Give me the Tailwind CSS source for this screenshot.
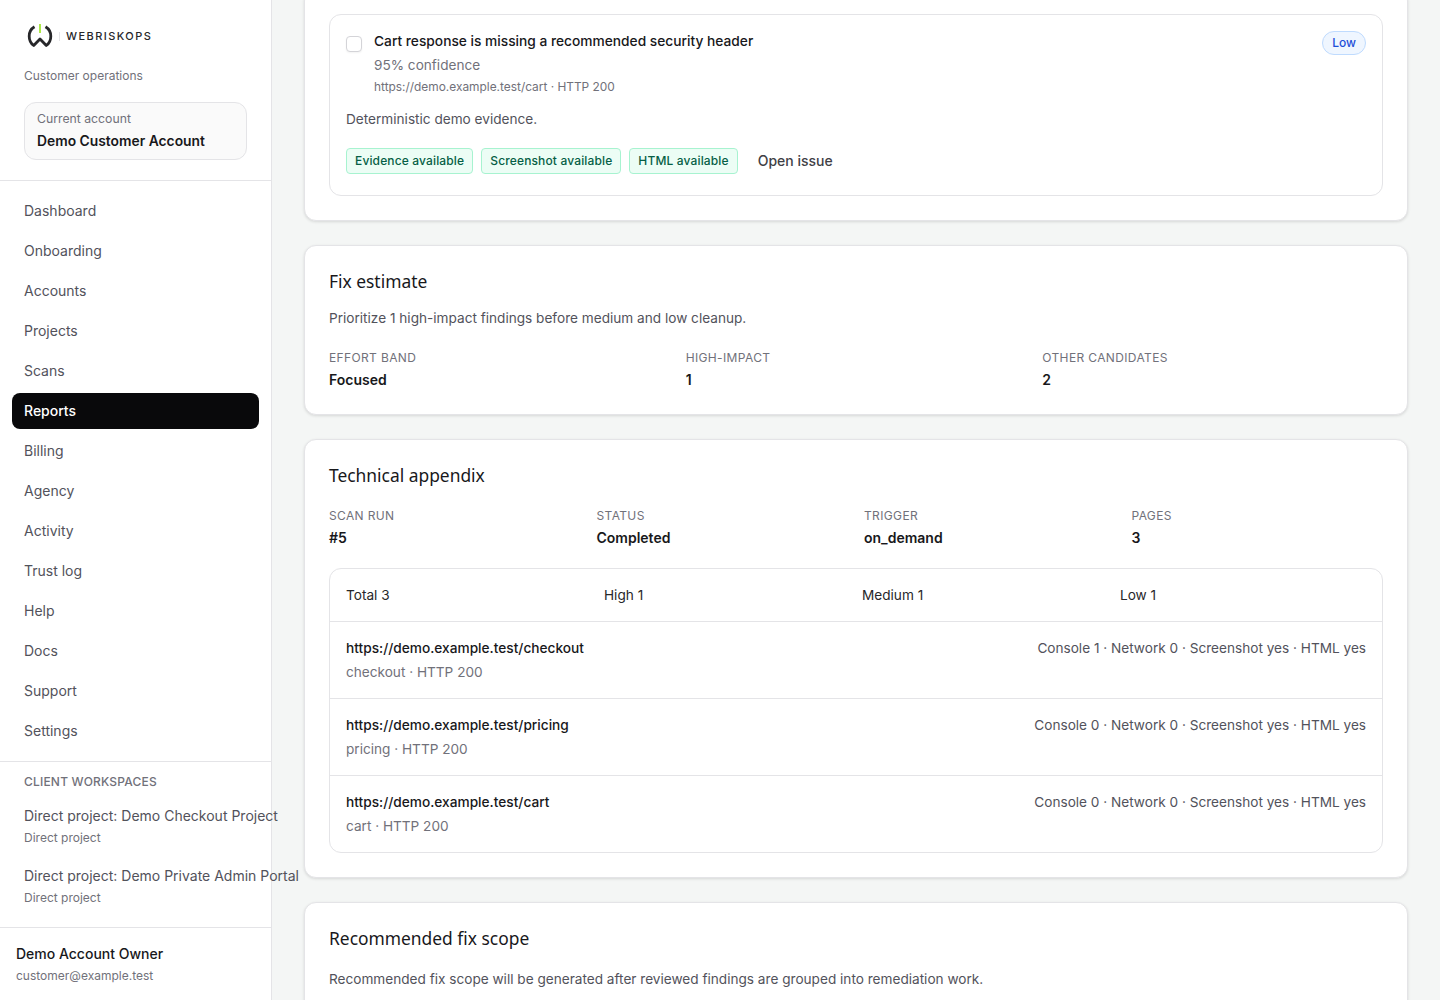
<!DOCTYPE html>
<html lang="en">
  <head>
    <meta charset="UTF-8" />
    <title>Reports</title>
    <script src="https://cdn.jsdelivr.net/npm/@tailwindcss/browser@4"></script>
  </head>
  <body class="bg-[#f4f6f5] text-[#18181b] font-['Inter',sans-serif] antialiased">
    <div class="flex h-[1000px] overflow-hidden">

      <!-- sidebar -->
      <aside class="w-[272px] shrink-0 h-[1000px] bg-white border-r border-[#e4e4e7] flex flex-col whitespace-nowrap">
        <div class="h-[181px] shrink-0 border-b border-[#e4e4e7] px-6 pt-[20px]">
          <div class="flex items-center h-[32px] ml-[3px]">
            <svg width="28" height="26" viewBox="0 0 28 26" fill="none">
              <path d="M7.5 3.8C4.2 5.8 2.2 9.2 2.2 13.2c0 3.8 1.7 7.2 4.5 9.3L13 16l6.3 6.5c2.8-2.1 4.5-5.5 4.5-9.3 0-4-2-7.4-5.3-9.4" stroke="#27272a" stroke-width="2.8" stroke-linejoin="round"/>
              <path d="M13 1v9" stroke="#a3e635" stroke-width="1.8"/>
            </svg>
            <span class="ml-[4px] h-[9px] w-px bg-[#e4e4e7]"></span>
            <span class="ml-[6px] pt-[1px] text-[11px] leading-none font-medium tracking-[0.13em] text-[#27272a]">WEBRISKOPS</span>
          </div>
          <p class="mt-[16px] text-xs leading-[16px] text-[#71717a]">Customer operations</p>
          <div class="mt-[18px] h-[58px] border border-[#e4e4e7] rounded-xl bg-[#fafafa] px-3 pt-[8px]">
            <p class="text-[12.25px] leading-[16px] text-[#71717a]">Current account</p>
            <p class="mt-[4px] text-[13.85px] leading-[20px] font-semibold text-[#18181b]">Demo Customer Account</p>
          </div>
        </div>

        <nav class="h-[581px] shrink-0 border-b border-[#e4e4e7] px-3 pt-3 flex flex-col gap-1 text-sm text-[#52525b]">
          <a class="h-9 px-3 flex items-center rounded-lg">Dashboard</a>
          <a class="h-9 px-3 flex items-center rounded-lg">Onboarding</a>
          <a class="h-9 px-3 flex items-center rounded-lg">Accounts</a>
          <a class="h-9 px-3 flex items-center rounded-lg">Projects</a>
          <a class="h-9 px-3 flex items-center rounded-lg">Scans</a>
          <a class="h-9 px-3 flex items-center rounded-lg bg-[#09090b] text-white font-medium">Reports</a>
          <a class="h-9 px-3 flex items-center rounded-lg">Billing</a>
          <a class="h-9 px-3 flex items-center rounded-lg">Agency</a>
          <a class="h-9 px-3 flex items-center rounded-lg">Activity</a>
          <a class="h-9 px-3 flex items-center rounded-lg">Trust log</a>
          <a class="h-9 px-3 flex items-center rounded-lg">Help</a>
          <a class="h-9 px-3 flex items-center rounded-lg">Docs</a>
          <a class="h-9 px-3 flex items-center rounded-lg">Support</a>
          <a class="h-9 px-3 flex items-center rounded-lg">Settings</a>
        </nav>

        <div class="h-[166px] shrink-0 border-b border-[#e4e4e7] px-6 pt-[12px]">
          <p class="text-xs leading-[16px] font-medium tracking-[0.016em] text-[#71717a]">CLIENT WORKSPACES</p>
          <div class="mt-[16px] h-[60px]">
            <p class="text-sm leading-[20px] text-[#52525b]">Direct project: Demo Checkout Project</p>
            <p class="mt-[4px] text-xs leading-[16px] text-[#71717a]">Direct project</p>
          </div>
          <div class="h-[60px]">
            <p class="text-sm leading-[20px] text-[#52525b]">Direct project: Demo Private Admin Portal</p>
            <p class="mt-[4px] text-xs leading-[16px] text-[#71717a]">Direct project</p>
          </div>
        </div>

        <div class="px-4 pt-[16px]">
          <p class="text-sm leading-[20px] font-medium text-[#18181b]">Demo Account Owner</p>
          <p class="mt-[4px] text-xs leading-[16px] text-[#71717a]">customer@example.test</p>
        </div>
      </aside>

      <!-- main -->
      <main class="flex-1 min-w-0 px-8 flex flex-col gap-6">

        <section class="-mt-[11px] shrink-0 bg-white border border-[#e4e4e7] rounded-xl shadow-[0_1px_3px_rgba(0,0,0,0.12)] p-6">
          <div class="h-[182px] border border-[#e4e4e7] rounded-xl px-4 pt-4 flex flex-col">
            <div class="flex items-start">
              <span class="mt-[5px] w-4 h-4 shrink-0 rounded border border-[#d4d4d8] bg-white shadow-xs"></span>
              <div class="ml-3 flex-1">
                <p class="text-[13.75px] leading-[20px] font-medium text-[#18181b]">Cart response is missing a recommended security header</p>
                <p class="mt-[4px] text-[13.6px] leading-[20px] text-[#71717a]">95% confidence</p>
                <p class="mt-[4px] text-[11.9px] leading-[16px] text-[#71717a]">https://demo.example.test/cart · HTTP 200</p>
              </div>
              <span class="h-[24px] px-[9px] flex items-center rounded-full border border-[#bfdbfe] bg-[#eff6ff] text-xs font-medium text-[#1d4ed8]">Low</span>
            </div>
            <p class="mt-[14px] text-[13.62px] leading-[20px] text-[#52525b]">Deterministic demo evidence.</p>
            <div class="mt-[19px] flex items-center gap-2">
              <span class="h-[26px] px-2 flex items-center rounded border border-[#a7f3d0] bg-[#ecfdf5] text-xs font-medium tracking-[0.012em] text-[#065f46]">Evidence available</span>
              <span class="h-[26px] px-2 flex items-center rounded border border-[#a7f3d0] bg-[#ecfdf5] text-xs font-medium tracking-[0.012em] text-[#065f46]">Screenshot available</span>
              <span class="h-[26px] px-2 flex items-center rounded border border-[#a7f3d0] bg-[#ecfdf5] text-xs font-medium tracking-[0.012em] text-[#065f46]">HTML available</span>
              <a class="ml-3 text-sm font-medium text-[#3f3f46]">Open issue</a>
            </div>
          </div>
        </section>

        <section class="shrink-0 h-[170px] bg-white border border-[#e4e4e7] rounded-xl shadow-[0_1px_3px_rgba(0,0,0,0.12)] px-6 pt-[21px]">
          <h2 class="font-['Noto_Sans',sans-serif] text-[17.4px] leading-[28px] text-[#18181b]">Fix estimate</h2>
          <p class="mt-[13px] text-[13.62px] leading-[20px] text-[#52525b]">Prioritize 1 high-impact findings before medium and low cleanup.</p>
          <div class="mt-[22px] grid grid-cols-3 gap-4">
            <div>
              <p class="text-xs leading-[16px] tracking-[0.03em] text-[#71717a]">EFFORT BAND</p>
              <p class="mt-[4px] text-sm leading-[20px] font-semibold">Focused</p>
            </div>
            <div>
              <p class="text-xs leading-[16px] tracking-[0.03em] text-[#71717a]">HIGH-IMPACT</p>
              <p class="mt-[4px] text-sm leading-[20px] font-semibold">1</p>
            </div>
            <div>
              <p class="text-xs leading-[16px] tracking-[0.03em] text-[#71717a]">OTHER CANDIDATES</p>
              <p class="mt-[4px] text-sm leading-[20px] font-semibold">2</p>
            </div>
          </div>
        </section>

        <section class="shrink-0 h-[439px] bg-white border border-[#e4e4e7] rounded-xl shadow-[0_1px_3px_rgba(0,0,0,0.12)] px-6 pt-[21px]">
          <h2 class="font-['Noto_Sans',sans-serif] text-[17.4px] leading-[28px] text-[#18181b]">Technical appendix</h2>
          <div class="mt-[19px] grid grid-cols-4 gap-4">
            <div>
              <p class="text-xs leading-[16px] tracking-[0.03em] text-[#71717a]">SCAN RUN</p>
              <p class="mt-[4px] text-sm leading-[20px] font-semibold">#5</p>
            </div>
            <div>
              <p class="text-xs leading-[16px] tracking-[0.03em] text-[#71717a]">STATUS</p>
              <p class="mt-[4px] text-sm leading-[20px] font-semibold">Completed</p>
            </div>
            <div>
              <p class="text-xs leading-[16px] tracking-[0.03em] text-[#71717a]">TRIGGER</p>
              <p class="mt-[4px] text-sm leading-[20px] font-semibold">on_demand</p>
            </div>
            <div>
              <p class="text-xs leading-[16px] tracking-[0.03em] text-[#71717a]">PAGES</p>
              <p class="mt-[4px] text-sm leading-[20px] font-semibold">3</p>
            </div>
          </div>
          <div class="mt-[20px] h-[285px] border border-[#e4e4e7] rounded-xl text-[13.62px]">
            <div class="h-[53px] px-4 grid grid-cols-4 gap-3 items-center border-b border-[#e4e4e7] text-[#27272a]">
              <span>Total 3</span>
              <span>High 1</span>
              <span>Medium 1</span>
              <span>Low 1</span>
            </div>
            <div class="h-[77px] px-4 pt-[16px] flex justify-between border-b border-[#e4e4e7]">
              <div>
                <p class="text-[13.7px] leading-[20px] font-medium text-[#18181b]">https://demo.example.test/checkout</p>
                <p class="mt-[4px] leading-[20px] text-[#71717a]">checkout · HTTP 200</p>
              </div>
              <p class="leading-[20px] text-[#52525b]">Console 1 · Network 0 · Screenshot yes · HTML yes</p>
            </div>
            <div class="h-[77px] px-4 pt-[16px] flex justify-between border-b border-[#e4e4e7]">
              <div>
                <p class="text-[13.7px] leading-[20px] font-medium text-[#18181b]">https://demo.example.test/pricing</p>
                <p class="mt-[4px] leading-[20px] text-[#71717a]">pricing · HTTP 200</p>
              </div>
              <p class="leading-[20px] text-[#52525b]">Console 0 · Network 0 · Screenshot yes · HTML yes</p>
            </div>
            <div class="h-[76px] px-4 pt-[16px] flex justify-between">
              <div>
                <p class="text-[13.7px] leading-[20px] font-medium text-[#18181b]">https://demo.example.test/cart</p>
                <p class="mt-[4px] leading-[20px] text-[#71717a]">cart · HTTP 200</p>
              </div>
              <p class="leading-[20px] text-[#52525b]">Console 0 · Network 0 · Screenshot yes · HTML yes</p>
            </div>
          </div>
        </section>

        <section class="shrink-0 h-[200px] bg-white border border-[#e4e4e7] rounded-xl shadow-[0_1px_3px_rgba(0,0,0,0.12)] px-6 pt-[21px]">
          <h2 class="font-['Noto_Sans',sans-serif] text-[17.4px] leading-[28px] text-[#18181b]">Recommended fix scope</h2>
          <p class="mt-[17px] text-[13.62px] leading-[20px] text-[#52525b]">Recommended fix scope will be generated after reviewed findings are grouped into remediation work.</p>
        </section>
      </main>
    </div>
  </body>
</html>
